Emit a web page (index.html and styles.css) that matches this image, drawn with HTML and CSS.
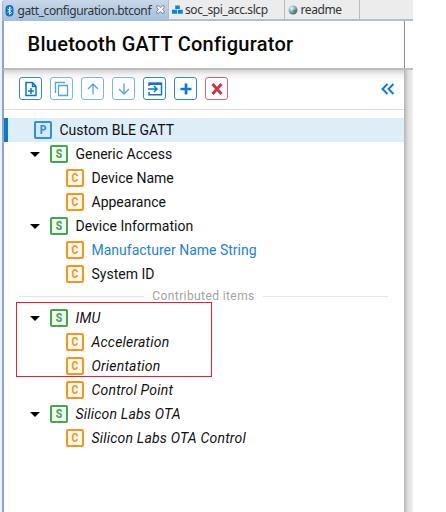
FILE: index.html
```
<!DOCTYPE html>
<html lang="en">
<head>
<meta charset="utf-8">
<title>Bluetooth GATT Configurator</title>
<link rel="stylesheet" href="styles.css">
</head>
<body>
<div class="window">
  <div class="tabs">
    <div class="tab tab-active">
      <svg class="tab-icon" width="10" height="12" viewBox="0 0 10 12"><rect x=".5" width="8" height="11.5" rx="4" fill="#0873c9"/><path d="M2.6 3.7 6.5 7.6 4.5 9.5V2l2 1.9-3.9 3.9" fill="none" stroke="#fff" stroke-width=".9"/></svg>
      <span class="tab-name t1">gatt_configuration.btconf</span>
      <svg class="close" width="9" height="9" viewBox="0 0 9 9"><path d="M.8.8h2l1.700 1.800L6.200.8h2v1.800L6.500 4.500l1.700 1.700v2h-2L4.500 6.500 2.800 8.200h-2v-2l1.700-1.700L.8 2.600z" fill="#f3f5f7" stroke="#7b7e83" stroke-width=".9"/></svg>
    </div>
    <div class="tab tab-slcp">
      <svg class="tab-icon" width="11" height="9" viewBox="0 0 11 9"><path d="M3.200.5h4.600v3.500H3.200zM0 4.700h5v4H0zM5.800 4.700h5v4h-5z" fill="#0b84dc"/></svg>
      <span class="tab-name t2">soc_spi_acc.slcp</span>
    </div>
    <div class="tab tab-readme">
      <svg class="tab-icon" width="10" height="10" viewBox="0 0 10 10"><defs><radialGradient id="globe" cx=".35" cy=".3" r=".75"><stop offset="0" stop-color="#eef7f8"/><stop offset=".45" stop-color="#8db8bd"/><stop offset="1" stop-color="#3a6388"/></radialGradient></defs><circle cx="5" cy="5" r="4.500" fill="url(#globe)"/><path d="M5 5.500 8.500 4 8 7.500 5.500 9z" fill="#5d8b55"/></svg>
      <span class="tab-name t3">readme</span>
    </div>
  </div>
  <header class="header"><h1>Bluetooth GATT Configurator</h1></header>
  <div class="body">
    <main class="panel">
      <div class="toolbar">
        <button class="tool"><svg viewBox="0 0 16 16"><path d="M3 1.500h6.500l3.500 4v9H3zM9.500 1.500v4H13M8 7v6M5 10h6"/></svg></button>
        <button class="tool dim"><svg viewBox="0 0 16 16"><path d="M1.500 12V1.500H11M4.500 4.500h9v10h-9z"/></svg></button>
        <button class="tool dim"><svg viewBox="0 0 16 16"><path d="M8 13.500V3M3 8l5-5 5 5"/></svg></button>
        <button class="tool dim"><svg viewBox="0 0 16 16"><path d="M8 2.500V13M3 8l5 5 5-5"/></svg></button>
        <button class="tool"><svg viewBox="0 0 16 16"><path d="M2 5V2.200h12.500v11.600H2V11M1 8h8.500M7 5l3 3-3 3"/><path d="M2 2.800h12.500" stroke-width="2.400"/></svg></button>
        <button class="tool"><svg viewBox="0 0 16 16"><path d="M8 2.500v11M2.500 8h11" stroke-width="2.700"/></svg></button>
        <button class="tool red"><svg viewBox="0 0 16 16"><path d="m3.500 3 9 10M12.500 3l-9 10" stroke-width="2.900"/></svg></button>
        <svg class="collapse" width="14" height="12" viewBox="0 0 14 12"><path d="M6.500 1 1.500 6l5 5M12.500 1l-5 5 5 5" fill="none" stroke="#0879d1" stroke-width="1.900"/></svg>
      </div>
      <div class="tree">
        <div class="row selected"><i class="badge profile"><b>P</b></i><span>Custom BLE GATT</span></div>
        <div class="row service"><b class="caret"></b><i class="badge s"><b>S</b></i><span>Generic Access</span></div>
        <div class="row char"><i class="badge c"><b>C</b></i><span>Device Name</span></div>
        <div class="row char"><i class="badge c"><b>C</b></i><span>Appearance</span></div>
        <div class="row service"><b class="caret"></b><i class="badge s"><b>S</b></i><span>Device Information</span></div>
        <div class="row char link"><i class="badge c"><b>C</b></i><span>Manufacturer Name String</span></div>
        <div class="row char"><i class="badge c"><b>C</b></i><span>System ID</span></div>
        <div class="divider">Contributed items</div>
        <div class="contributed">
          <div class="row service"><b class="caret"></b><i class="badge s"><b>S</b></i><span>IMU</span></div>
          <div class="row char"><i class="badge c"><b>C</b></i><span>Acceleration</span></div>
          <div class="row char"><i class="badge c"><b>C</b></i><span>Orientation</span></div>
          <div class="row char"><i class="badge c"><b>C</b></i><span>Control Point</span></div>
          <div class="row service"><b class="caret"></b><i class="badge s"><b>S</b></i><span>Silicon Labs OTA</span></div>
          <div class="row char"><i class="badge c"><b>C</b></i><span>Silicon Labs OTA Control</span></div>
          <div class="highlight"></div>
        </div>
      </div>
    </main>
    <div class="gutter"></div>
  </div>
</div>
</body>
</html>
```
FILE: styles.css
```
* { box-sizing: border-box; }
body { margin: 0; background: #fff; font-family: Roboto, "Liberation Sans", sans-serif; color: #111; overflow: hidden; }
.window { width: 413px; height: 512px; display: flex; flex-direction: column; border-left: 2px solid #edf0f4; }
.tabs { height: 21px; flex: none; display: flex; background: #ececec; border-bottom: 2px solid #aebfd1; font-family: "Noto Sans", "Open Sans", sans-serif; font-size: 12px; color: #303438; }
.tab { display: flex; align-items: center; height: 21px; border-right: 1px solid #bbb; white-space: nowrap; }
.tab-active { width: 167px; padding-left: 2px; background: linear-gradient(#c9d8e9, #a4bedc); border-left: 1px solid #9eb6d0; border-radius: 4px 0 0 0; }
.tab-slcp { width: 116px; height: 19px; padding-left: 3px; }
.tab-readme { width: 75px; height: 19px; padding-left: 3px; }
.tab-icon { flex: none; }
.tab-name { line-height: 20px; flex: none; padding-top: 1px; }
.t1 { width: 135px; margin-left: 2.5px; letter-spacing: -.4px; }
.t2 { margin-left: 2px; letter-spacing: -.4px; }
.t3 { margin-left: 2.5px; letter-spacing: -.4px; }
.close { margin-left: 3px; margin-top: -2px; }
.header { height: 49px; flex: none; display: flex; align-items: center; padding-left: 23.5px; border-left: 2px solid #88a6c7; border-bottom: 2px solid #bdbdbd; background: linear-gradient(#8f8f8f, #8f8f8f) 400px 0 / 1px 100% no-repeat, #fff; }
h1 { margin: 0; padding-bottom: 2px; font-size: 20px; line-height: 24px; font-weight: 500; letter-spacing: .27px; white-space: nowrap; color: #090909; }
.body { flex: 1; display: flex; min-height: 0; }
.panel { flex: 1; border-left: 2px solid #88a6c7; background: linear-gradient(#d4d4d4, #f3f3f3 5px, #fff 11px); }
.toolbar { height: 40px; padding: 7px 9px 9px 15px; display: flex; align-items: center; gap: 8px; border-bottom: 1px solid #dedede; }
.tool { width: 23px; height: 23px; flex: none; padding: 0; border: 1px solid #2d8ed5; border-radius: 3px; background: #fff; color: #0879d1; display: grid; place-items: center; }
.tool svg { width: 16px; height: 16px; fill: none; stroke: currentColor; stroke-width: 1.500; }
.dim { border-color: #79b9e5; color: #52a5df; }
.dim svg { stroke-width: 1.300; }
.red { border-color: #d76874; color: #cb3445; }
.collapse { margin-left: auto; }
.tree { padding-top: 8px; }
.row { height: 24px; display: flex; align-items: center; font-size: 14px; line-height: 20px; white-space: nowrap; }
.selected { background: #deeef9; border-left: 4px solid #0879d1; padding-left: 26px; }
.service { padding-left: 26px; }
.char { padding-left: 62px; }
.link { color: #2384d5; }
.caret { width: 0; height: 0; border: 5px solid transparent; border-top-color: #050505; border-bottom: 0; margin-right: 10px; }
.badge { width: 18px; height: 18px; flex: none; border: 2px solid; border-radius: 2px; margin-right: 7.5px; font: 900 13px/14px Roboto, sans-serif; text-align: center; }
.badge b { display: block; font-weight: 800; transform: scaleX(.8); }
.profile { color: #2b91e4; background: #d7eafa; }
.s { color: #42a84a; background: #f4faf4; }
.c { color: #fb9514; background: #fffaf2; }
.divider { height: 20px; margin: 0 16px 0 15px; display: flex; align-items: center; gap: 8px; color: #a3a3a3; font-size: 12px; letter-spacing: .4px; white-space: nowrap; }
.divider::before, .divider::after { content: ""; height: 1px; background: #e6e6e6; flex: 1; }
.contributed { position: relative; }
.contributed .row span { font-style: italic; letter-spacing: .2px; }
.highlight { position: absolute; left: 12px; top: -4px; width: 196px; height: 75px; border: 1px solid #e8202c; }
.gutter { width: 9px; background: linear-gradient(90deg, #b4b4b4, #dedede 4px, #f0f0f0); }
```
